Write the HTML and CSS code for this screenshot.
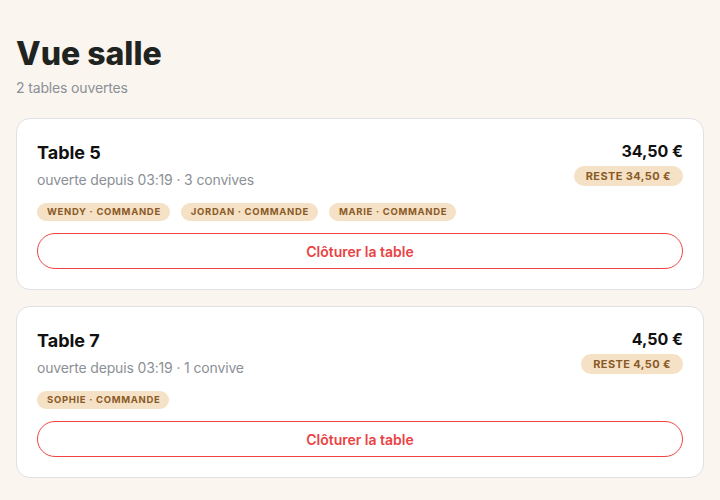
FILE: index.html
```html
<!DOCTYPE html>
<html lang="fr">
<head>
  <meta charset="UTF-8">
  <title>Vue salle</title>
  <link rel="stylesheet" href="styles.css">
</head>
<body>
  <div class="salle">
    <header class="entete">
      <h1>Vue salle</h1>
      <p class="sous-titre">2 tables ouvertes</p>
    </header>

    <div class="tables">
      <div class="carte">
        <div class="carte-haut">
          <div class="infos">
            <h2>Table 5</h2>
            <p class="meta">ouverte depuis 03:19 · 3 convives</p>
          </div>
          <div class="totaux">
            <div class="montant">34,50 €</div>
            <span class="reste">Reste 34,50 €</span>
          </div>
        </div>
        <div class="convives">
          <span class="puce">Wendy · commande</span>
          <span class="puce">Jordan · commande</span>
          <span class="puce">Marie · commande</span>
        </div>
        <button class="cloturer" type="button">Clôturer la table</button>
      </div>

      <div class="carte">
        <div class="carte-haut">
          <div class="infos">
            <h2>Table 7</h2>
            <p class="meta">ouverte depuis 03:19 · 1 convive</p>
          </div>
          <div class="totaux">
            <div class="montant">4,50 €</div>
            <span class="reste">Reste 4,50 €</span>
          </div>
        </div>
        <div class="convives">
          <span class="puce">Sophie · commande</span>
        </div>
        <button class="cloturer" type="button">Clôturer la table</button>
      </div>
    </div>
  </div>
</body>
</html>
```

FILE: styles.css
```css
body {
  margin: 0;
  background-color: #faf5ef;
  font-family: 'Inter', sans-serif;
  color: #1f2420;
}

.salle {
  padding: 34px 16px 24px;
}

h1 {
  margin: 0;
  font-size: 32px;
  line-height: 40px;
  font-weight: 800;
  color: #1f2420;
}

.sous-titre {
  margin: 4px 0 0;
  font-size: 14px;
  line-height: 20px;
  letter-spacing: -0.15px;
  color: #8b9096;
}

.tables {
  display: flex;
  flex-direction: column;
  gap: 16px;
  margin-top: 20px;
}

.carte {
  background-color: #ffffff;
  border: 1px solid #dfe1e5;
  border-radius: 14px;
  padding: 20px;
}

.carte-haut {
  display: flex;
  justify-content: space-between;
  align-items: flex-start;
}

h2 {
  margin: 0;
  font-size: 18px;
  line-height: 27px;
  font-weight: 700;
  color: #111111;
}

.meta {
  margin: 4px 0 0;
  font-size: 14px;
  line-height: 20px;
  letter-spacing: -0.15px;
  color: #8b9096;
}

.totaux {
  display: flex;
  flex-direction: column;
  align-items: flex-end;
}

.montant {
  font-size: 16px;
  line-height: 24px;
  font-weight: 700;
  color: #111111;
}

.reste, .puce {
  background-color: #f5e1c6;
  color: #8a5a26;
  font-weight: 700;
  text-transform: uppercase;
  border-radius: 999px;
}

.reste {
  margin-top: 3px;
  padding: 3px 12px;
  font-size: 11px;
  line-height: 14px;
  letter-spacing: 0.4px;
}

.convives {
  display: flex;
  gap: 11px;
  margin-top: 13px;
}

.puce {
  padding: 3px 9px 3px 10px;
  font-size: 9.5px;
  line-height: 12px;
  letter-spacing: 0.68px;
}

.cloturer {
  display: block;
  width: 100%;
  margin-top: 12px;
  height: 36px;
  background-color: #ffffff;
  border: 1px solid #ef4444;
  border-radius: 999px;
  color: #e94343;
  font-family: 'Inter', sans-serif;
  font-size: 14px;
  font-weight: 600;
  cursor: pointer;
}
```
